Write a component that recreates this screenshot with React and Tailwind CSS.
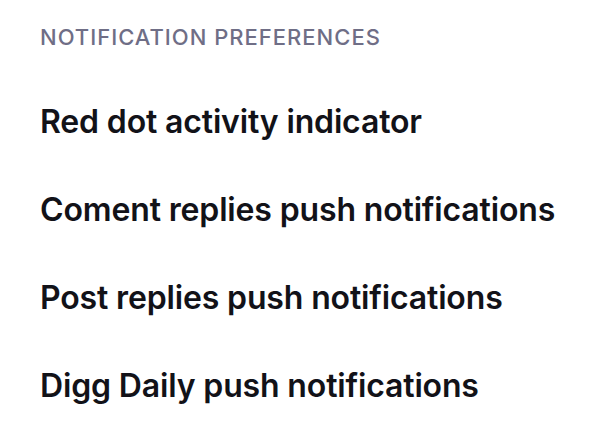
const items = [
  "Red dot activity indicator",
  "Coment replies push notifications",
  "Post replies push notifications",
  "Digg Daily push notifications",
];

export default function App() {
  return (
    <div
      className="w-[600px] h-[444px] bg-white px-10 pt-[24px] overflow-hidden"
      style={{ fontFamily: "Inter, 'Liberation Sans', sans-serif" }}
    >
      <p className="text-[22px] leading-[26px] font-medium uppercase tracking-[1px] text-[#6f6e86]">
        Notification preferences
      </p>
      <div className="mt-[52px] flex flex-col gap-[48px]">
        {items.map((label) => (
          <div
            key={label}
            className="text-[32px] leading-[40px] font-semibold text-[#121218] tracking-[-0.15px]"
          >
            {label}
          </div>
        ))}
      </div>
    </div>
  );
}
